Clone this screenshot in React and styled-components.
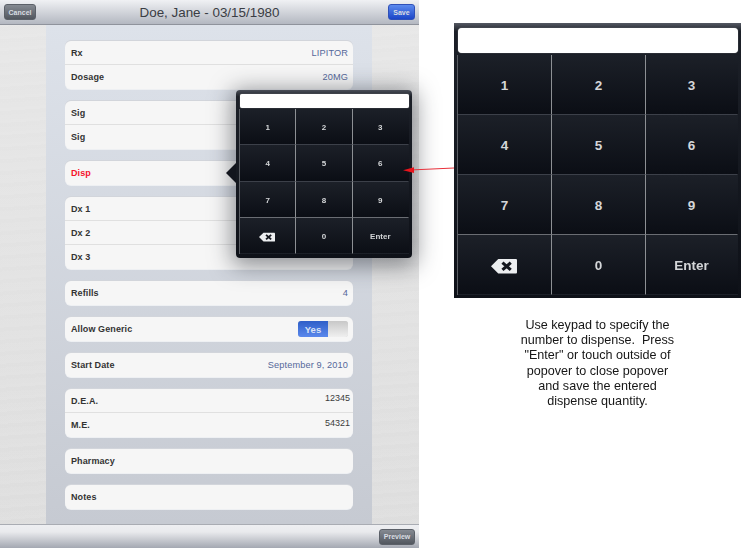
import React from "react";
import styled, { createGlobalStyle } from "styled-components";

const Global = createGlobalStyle`
  html, body { margin: 0; padding: 0; background: #fff; }
  body { font-family: "Liberation Sans", Arial, sans-serif; }
  #root { width: 741px; height: 548px; overflow: hidden; }
`;

const Page = styled.div`
  position: relative;
  display: flex;
  width: 741px;
  height: 548px;
  filter: blur(0.45px);
`;

const Device = styled.div`
  position: relative;
  display: flex;
  flex-direction: column;
  width: 419px;
  height: 548px;
  flex: none;
  background:
    repeating-linear-gradient(176deg, rgba(255, 255, 255, 0.05) 0 3px, rgba(0, 0, 0, 0.004) 3px 7px, rgba(255, 255, 255, 0.02) 7px 12px),
    linear-gradient(#e8e8e8, #dedede);
`;

const Bar = styled.div`
  display: flex;
  align-items: center;
  justify-content: space-between;
  flex: none;
  height: 24px;
  padding: 0 4px;
  position: relative;
  background: linear-gradient(#f0f1f4, #b4b8c1);
  border-bottom: 1px solid #8f939c;
`;

const BottomBar = styled(Bar)`
  justify-content: flex-end;
  border-bottom: 0;
  border-top: 1px solid #a9acb3;
  height: 23px;
  background: linear-gradient(#eeeff2 0, #e9eaed 30%, #a4a8b2 100%);
`;

const Title = styled.div`
  position: absolute;
  left: 0;
  right: 0;
  text-align: center;
  font-size: 13.4px;
  color: #3a3d44;
`;

const NavButton = styled.div`
  position: relative;
  display: flex;
  align-items: center;
  justify-content: center;
  width: ${(p) => p.$w}px;
  height: 16px;
  border-radius: 3px;
  font-size: 7px;
  font-weight: bold;
  color: #d9dde2;
  border: 1px solid ${(p) => (p.$blue ? "#2f50b8" : "#5b6068")};
  box-sizing: border-box;
  background: ${(p) =>
    p.$blue ? "linear-gradient(#5b8aee, #1c46c8)" : "linear-gradient(#858a92, #52575f)"};
`;

const Content = styled.div`
  flex: 1;
  margin: 0 47px 0 46px;
  padding: 16px 19px 0;
  display: flex;
  flex-direction: column;
  gap: 12px;
  background: linear-gradient(#dde2ea, #c6cad2);
`;

const Group = styled.div`
  background: #f6f6f6;
  border-radius: 6px;
  box-shadow: 0 -1px 0 #d2d5db, 0 1px 0 #eef0f3;
  overflow: hidden;
`;

const Row = styled.div`
  display: flex;
  align-items: center;
  justify-content: space-between;
  height: 24px;
  box-sizing: border-box;
  padding: 0 5px 0 6px;
  &:not(:last-child) { border-bottom: 1px solid #e0e0e0; }
`;

const Label = styled.span`
  font-size: 9px;
  font-weight: bold;
  color: ${(p) => (p.$red ? "#f5142c" : "#333333")};
  letter-spacing: 0.1px;
`;

const Value = styled.span`
  font-size: 9.2px;
  letter-spacing: 0.12px;
  color: #55689a;
`;

const PlainValue = styled.span`
  font-size: 9px;
  color: #3c3c3c;
  margin: -5px -2px 0 0;
`;

const Toggle = styled.div`
  display: flex;
  width: 50px;
  height: 16px;
  border-radius: 3px;
  overflow: hidden;
  box-shadow: inset 0 0 0 1px #cfcfcf;
`;

const ToggleOn = styled.div`
  width: 30px;
  display: flex;
  align-items: center;
  justify-content: center;
  font-size: 9.5px;
  font-weight: bold;
  color: #d8e2f6;
  background: linear-gradient(#2f5fc8, #5a88ec);
`;

const ToggleOff = styled.div`
  flex: 1;
  background: linear-gradient(#c8c8c8, #f0f0f0);
`;

const Popover = styled.div`
  position: absolute;
  left: 236px;
  top: 90px;
  width: 176px;
  height: 168px;
  box-sizing: border-box;
  padding: 4px 3px 4px 4px;
  display: flex;
  flex-direction: column;
  border-radius: 4px;
  background: linear-gradient(#4a4e58 0, #1c2028 4%, #0e1118 100%);
  box-shadow: 0 4px 22px 4px rgba(40, 44, 52, 0.5);
`;

const PopArrow = styled.div`
  position: absolute;
  left: -10px;
  top: 73px;
  width: 0;
  height: 0;
  border-top: 10px solid transparent;
  border-bottom: 10px solid transparent;
  border-right: 10px solid #12151d;
`;

const PadInput = styled.div`
  flex: none;
  height: ${(p) => (p.$big ? 25 : 14)}px;
  background: #fff;
  border-radius: ${(p) => (p.$big ? 4 : 2)}px;
  box-shadow: 0 0 1px #bbb;
`;

const PadGrid = styled.div`
  flex: 1;
  margin-top: ${(p) => (p.$big ? 2 : 1)}px;
  display: grid;
  grid-template-columns: ${(p) => (p.$big ? "94px 94px 1fr" : "repeat(3, 1fr)")};
  grid-template-rows: repeat(4, 1fr);
  box-shadow: -1px 0 0 #5a5d63;
`;

const Key = styled.div`
  display: flex;
  align-items: center;
  justify-content: center;
  padding-top: ${(p) => (p.$big ? 2 : 2)}px;
  box-sizing: border-box;
  font-size: ${(p) => (p.$big ? 13.5 : 8)}px;
  font-weight: bold;
  color: #d4d6d8;
  background: linear-gradient(#1c2028, #0b0e15);
  border-right: 1px solid ${(p) => (p.$edge ? "transparent" : "#8d9094")};
  border-bottom: 1px solid ${(p) => (p.$last ? "transparent" : p.$strong ? "#6a6d73" : "#3c4049")};
`;

const Right = styled.div`
  flex: 1;
  padding: 23px 0 0 35px;
  display: flex;
  flex-direction: column;
  align-items: stretch;
`;

const BigPad = styled.div`
  width: 287px;
  height: 275px;
  box-sizing: border-box;
  padding: 5px 3px 3px 4px;
  display: flex;
  flex-direction: column;
  background: linear-gradient(#555963 0, #1c2028 3%, #0e1118 100%);
`;

const Note = styled.p`
  margin: 20px 0 0;
  width: 287px;
  text-align: center;
  font-size: 12.6px;
  line-height: 15.2px;
  color: #161616;
`;

const Pointer = styled.svg`
  position: absolute;
  left: 400px;
  top: 160px;
`;

const BackspaceGlyph = styled.svg`
  margin: 1px 1px 0 0;
`;

const BackspaceIcon = ({ size }) => (
  <BackspaceGlyph width={size} height={size * 0.64} viewBox="0 0 25 16">
    <path d="M0 8 L7 1 H24 a1 1 0 0 1 1 1 V14 a1 1 0 0 1 -1 1 H7 Z" fill="#eceef0" />
    <path d="M11 4.5 L19 11.5 M19 4.5 L11 11.5" stroke="#14171e" strokeWidth="3" />
  </BackspaceGlyph>
);

const keys = ["1", "2", "3", "4", "5", "6", "7", "8", "9", "back", "0", "Enter"];

const Keypad = ({ big }) => (
  <>
    <PadInput $big={big} />
    <PadGrid $big={big}>
      {keys.map((k, i) => (
        <Key key={k} $big={big} $edge={i % 3 === 2} $strong={i >= 6 && i < 9} $last={i >= 9}>
          {k === "back" ? <BackspaceIcon size={big ? 26 : 16} /> : k}
        </Key>
      ))}
    </PadGrid>
  </>
);

const Field = ({ label, value, red }) => (
  <Row>
    <Label $red={red}>{label}</Label>
    {value && <Value>{value}</Value>}
  </Row>
);

export default function App() {
  return (
    <Page>
      <Global />
      <Device>
        <Bar>
          <Title>Doe, Jane - 03/15/1980</Title>
          <NavButton $w={32}>Cancel</NavButton>
          <NavButton $w={27} $blue>Save</NavButton>
        </Bar>
        <Content>
          <Group>
            <Field label="Rx" value="LIPITOR" />
            <Field label="Dosage" value="20MG" />
          </Group>
          <Group>
            <Field label="Sig" />
            <Field label="Sig" />
          </Group>
          <Group>
            <Field label="Disp" red />
          </Group>
          <Group>
            <Field label="Dx 1" />
            <Field label="Dx 2" />
            <Field label="Dx 3" />
          </Group>
          <Group>
            <Field label="Refills" value="4" />
          </Group>
          <Group>
            <Row>
              <Label>Allow Generic</Label>
              <Toggle>
                <ToggleOn>Yes</ToggleOn>
                <ToggleOff />
              </Toggle>
            </Row>
          </Group>
          <Group>
            <Field label="Start Date" value="September 9, 2010" />
          </Group>
          <Group>
            <Row>
              <Label>D.E.A.</Label>
              <PlainValue>12345</PlainValue>
            </Row>
            <Row>
              <Label>M.E.</Label>
              <PlainValue>54321</PlainValue>
            </Row>
          </Group>
          <Group>
            <Field label="Pharmacy" />
          </Group>
          <Group>
            <Field label="Notes" />
          </Group>
        </Content>
        <BottomBar>
          <NavButton $w={36}>Preview</NavButton>
        </BottomBar>
        <Popover>
          <PopArrow />
          <Keypad />
        </Popover>
      </Device>
      <Right>
        <BigPad>
          <Keypad big />
        </BigPad>
        <Note>
          Use keypad to specify the
          <br />
          number to dispense. &nbsp;Press
          <br />
          "Enter" or touch outside of
          <br />
          popover to close popover
          <br />
          and save the entered
          <br />
          dispense quantity.
        </Note>
      </Right>
      <Pointer width="56" height="16" viewBox="0 0 56 16">
        <path d="M54 8 L10 10" stroke="#e8303a" strokeWidth="1" fill="none" />
        <path d="M3 10.3 L14 7.3 L14 13 Z" fill="#e8141c" />
      </Pointer>
    </Page>
  );
}
